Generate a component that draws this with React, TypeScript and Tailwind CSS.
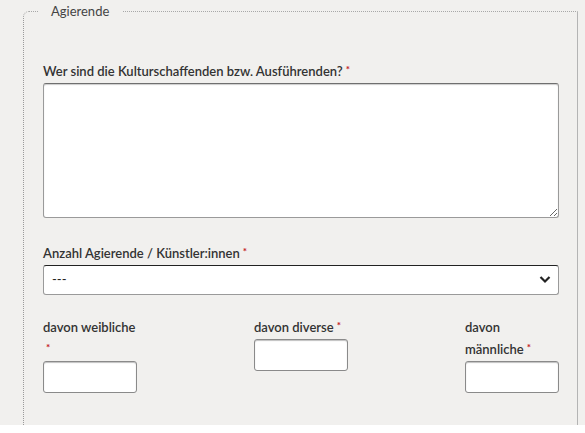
import React from "react";

const Req = () => (
  <span className="text-[#c4161c] text-[10px] font-bold relative -top-[3px] ml-[3px]">*</span>
);

const labelCls = "block text-[13px] leading-[22px] font-semibold text-[#333]";
const smallInput =
  "block w-[94px] h-[32px] bg-white border border-[#8a8a8a] rounded-[3px] shadow-[inset_0_1px_1px_rgba(0,0,0,0.25)]";

export default function App() {
  return (
    <div className="w-[585px] h-[433px] bg-white" style={{ fontFamily: "Lato, 'Open Sans', sans-serif" }}>
      <div className="h-[425px] bg-[#f1f0ee] pl-[23px] pr-[7px] overflow-hidden">
        <fieldset className="h-[440px] border border-b-0 border-l-[#9a9a9a] border-t-[#a8a8a8] border-r-[#b4b4b4] rounded-tl-[6px] border-dotted pl-[19px] pr-[18px] pt-[38px]" style={{ borderRightStyle: "solid" }}>
          <legend className="-ml-[5px] px-[13px] text-[13px] leading-[22px] text-[#444]">Agierende</legend>

          <label className={labelCls}>
            Wer sind die Kulturschaffenden bzw. Ausführenden?
            <Req />
          </label>
          <textarea className="block w-full h-[135px] bg-white border border-[#9a9a9a] border-t-[#6f6f6f] rounded-[3px] shadow-[inset_0_1px_1px_rgba(0,0,0,0.2)]" />

          <label className={labelCls + " mt-[24px]"}>
            Anzahl Agierende / Künstler:innen
            <Req />
          </label>
          <div className="relative">
            <select className="block w-full h-[30px] appearance-none bg-white border border-[#9a9a9a] border-t-[#222] rounded-[3px] pl-[8px] text-[13px] text-[#222]">
              <option>---</option>
            </select>
            <svg className="absolute right-[8px] top-[10px]" width="12" height="9" viewBox="0 0 12 9">
              <path d="M1.5 2 L6 6.5 L10.5 2" fill="none" stroke="#222" strokeWidth="2.2" />
            </svg>
          </div>

          <div className="flex justify-between mt-[21px]">
            <div className="w-[94px]">
              <div className={labelCls + " whitespace-nowrap"}>davon weibliche</div>
              <div className={labelCls}>
                <Req />
              </div>
              <input className={smallInput} />
            </div>
            <div className="w-[94px]">
              <div className={labelCls + " whitespace-nowrap"}>
                davon diverse
                <Req />
              </div>
              <input className={smallInput} />
            </div>
            <div className="w-[94px]">
              <div className={labelCls}>davon</div>
              <div className={labelCls + " whitespace-nowrap"}>
                männliche
                <Req />
              </div>
              <input className={smallInput} />
            </div>
          </div>
        </fieldset>
      </div>
    </div>
  );
}
